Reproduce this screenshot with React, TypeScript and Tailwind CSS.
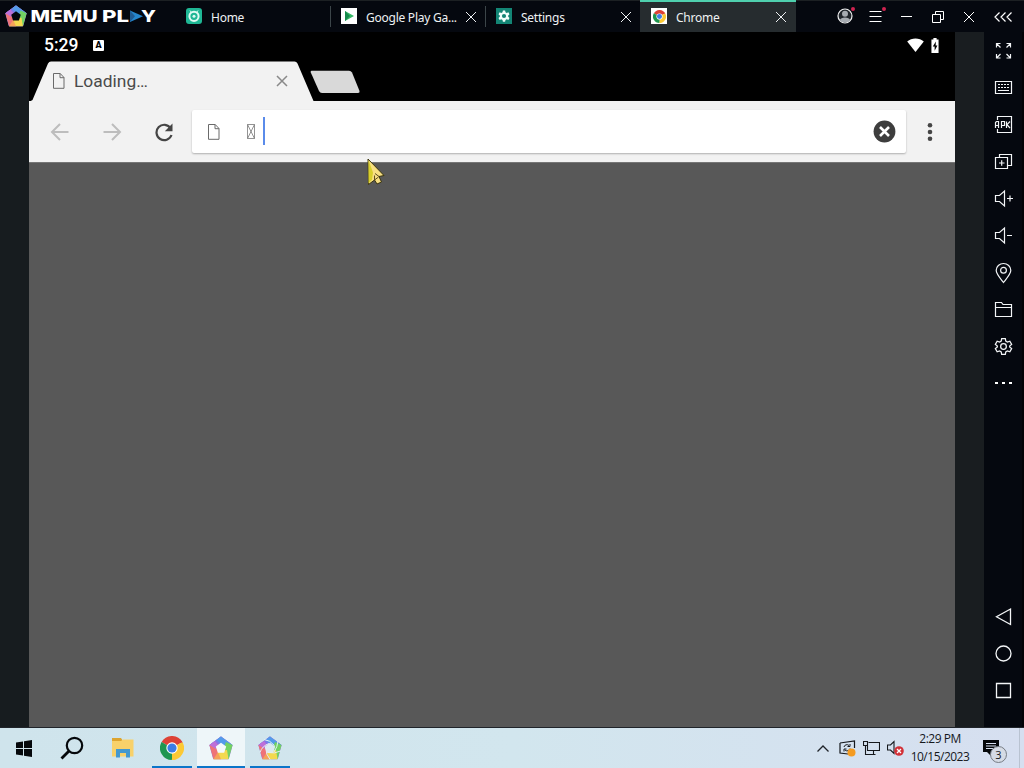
import type { ReactNode } from "react";

function Pentagon({ size, hole = "#05080f", swirl = false }: { size: number; hole?: string; swirl?: boolean }) {
  return (
    <svg width={size} height={size} viewBox="0 0 24 24">
      <path d="M12 .8L.8 9L4.600 22.800H19.400L23.200 9z" fill="#9b83d8" stroke="#9b83d8" strokeWidth="1" strokeLinejoin="round" />
      <path d="M12 .5L.5 9L8 12L13 6z" fill="#8078e8" />
      <path d="M12 .5L23.500 9L16 12L7.500 4z" fill="#539bea" />
      <path d="M23.500 9L19.500 23.200L13 17L17 6z" fill="#72d262" />
      <path d="M19.500 23.200H4.500L8 15L18 14z" fill="#f3d94f" />
      <path d="M12 23.200H4.500L8 14z" fill="#f5a25a" />
      <path d="M4.500 23.200L.5 9L8.500 8L9 16z" fill="#ee7378" />
      <path d="M.5 9L6 5L9 9L7 13z" fill="#bd6fd8" />
      <path d="M12 6.800L17.200 10.600L15.200 16.800H8.800L6.800 10.600z" fill={hole} />
      {swirl && (
        <path d="M6 3.500Q12 4 16.500 9.500M20 5Q19.500 11 16 16M22.500 15Q17 18 9.500 16.500M12 23.500Q8 19 7.500 11M2 16.500Q4 10 11 7.500" stroke="#e3f1f6" strokeWidth="1" fill="none" />
      )}
    </svg>
  );
}

function ChromeLogo({ size }: { size: number }) {
  return (
    <svg width={size} height={size} viewBox="0 0 24 24">
      <path d="M12 12L1.6 6A12 12 0 0 1 22.4 6Z" fill="#dd4236" />
      <path d="M12 12L22.4 6A12 12 0 0 1 12 24Z" fill="#fcc934" />
      <path d="M12 12L12 24A12 12 0 0 1 1.6 6Z" fill="#1f9650" />
      <path d="M12 6.5H22.7L20 4L12 4Z" fill="#dd4236" />
      <path d="M16.8 14.7L11.5 24L15 23.6L19 16Z" fill="#fcc934" />
      <path d="M7.2 14.7L1.6 6L3 12Z" fill="#1f9650" />
      <circle cx="12" cy="12" r="5.7" fill="#fff" />
      <circle cx="12" cy="12" r="4.6" fill="#3c7de6" />
    </svg>
  );
}

function Gear({ className }: { className?: string }) {
  return (
    <svg className={className} viewBox="0 0 24 24" fill="none" stroke="currentColor">
      <path d="M9.7 2h4.6l.6 3.2 2 1.2 3.1-1.1 2.3 4-2.5 2.1v1.2l2.5 2.1-2.3 4-3.1-1.1-2 1.2-.6 3.2H9.7l-.6-3.2-2-1.2L4 18.7l-2.3-4 2.5-2.1v-1.2L1.7 9.3l2.3-4 3.1 1.1 2-1.2z" />
      <circle cx="12" cy="12" r="3.6" />
    </svg>
  );
}

function PageIcon() {
  return (
    <svg width="12" height="16" viewBox="0 0 12 16" fill="none" stroke="#6a6a6a" strokeWidth="1">
      <path d="M.5.5h6.7l3.8 4v10.8H.5zM7 .5v4.2h4" />
    </svg>
  );
}

function Cross({ className }: { className?: string }) {
  return (
    <svg width="12" height="12" viewBox="0 0 12 12" stroke="currentColor" fill="none" className={className}>
      <path d="M1 1l10 10M11 1L1 11" />
    </svg>
  );
}

const homeIcon = (
  <svg width="16" height="16" viewBox="0 0 16 16" fill="none">
    <rect width="16" height="16" rx="3" fill="#1fb795" />
    <circle cx="8" cy="8.300" r="4.600" stroke="#dffaf3" strokeWidth="2" />
    <circle cx="8" cy="8.300" r="1.500" fill="#dffaf3" />
    <path d="M4 2.500l1.500 2M12 2.500l-1.500 2" stroke="#dffaf3" />
  </svg>
);

const playIcon = (
  <svg width="16" height="16" viewBox="0 0 16 16">
    <path d="M0 0h16v16H0z" fill="#fff" />
    <path d="M4 3l9 5-9 5z" fill="#35b866" />
    <path d="M4 3l5 5-5 5z" fill="#168a4d" />
  </svg>
);

const settingsIcon = (
  <svg width="16" height="16" viewBox="0 0 16 16">
    <path d="M0 0h16v16H0z" fill="#138575" />
    <path
      d="M6.900 2.500h2.200l.4 1.700 1.200.7 1.700-.6 1.100 2-1.300 1.200v1.200l1.300 1.200-1.100 2-1.700-.6-1.200.7-.4 1.700H6.900l-.4-1.700-1.200-.7-1.700.6-1.100-2 1.300-1.200V7.500L2.500 6.300l1.100-2 1.700.6 1.200-.7z"
      fill="#f2fffc"
    />
    <circle cx="8" cy="8" r="2.100" fill="#138575" />
  </svg>
);

const chromeIcon = (
  <span className="flex size-4 items-center justify-center bg-white">
    <ChromeLogo size={13} />
  </span>
);

const tabs = [
  { label: "Home", icon: homeIcon, closable: false, active: false },
  { label: "Google Play Ga...", icon: playIcon, closable: true, active: false },
  { label: "Settings", icon: settingsIcon, closable: true, active: false },
  { label: "Chrome", icon: chromeIcon, closable: true, active: true },
];

function TitleButton({ children, dot, label }: { children: ReactNode; dot?: boolean; label: string }) {
  return (
    <button aria-label={label} className="relative flex h-8 w-[31px] items-center justify-center text-white">
      {children}
      {dot && <span className="absolute top-[7px] left-[22px] size-1 rounded-full bg-[#cf2350]" />}
    </button>
  );
}

function TitleBar() {
  return (
    <header className="flex h-8 border-t border-[#1c2023] bg-[#05080f]">
      <div className="-mt-px flex h-8 w-[175px] items-center pl-[5px]">
        <Pentagon size={22} />
        <svg width="132" height="28" viewBox="0 0 132 28" className="ml-px" fill="#fff" fontFamily="Inter" fontWeight="800" fontSize="16">
          <text x="2.5" y="20" textLength="67" lengthAdjust="spacingAndGlyphs">MEMU</text>
          <text x="74" y="20" textLength="27" lengthAdjust="spacingAndGlyphs">PL</text>
          <path d="M102 8.500L115 14.300L102 20z" fill="#2586cc" />
          <path d="M102 8.500L107 14.300L102 20z" fill="#205c93" />
          <text x="113" y="20" textLength="15" lengthAdjust="spacingAndGlyphs">Y</text>
        </svg>
      </div>
      {tabs.map((tab, i) => (
        <div
          key={tab.label}
          className={`relative -mt-px flex h-8 items-center pl-[11px] font-['Noto_Sans'] text-[12px] tracking-[-0.25px] text-[#eef1f3] ${
            tab.active ? "w-[156px] border-t-2 border-[#4fd0ae] bg-[#262c2f] pr-[9px] pb-0.5" : "w-[155px] pr-2"
          }`}
        >
          {tab.icon}
          <span className="ml-[9px] grow pt-[3px] leading-4 whitespace-nowrap">{tab.label}</span>
          {tab.closable && <Cross className="mt-px shrink-0" />}
          {i < 2 && <span className="absolute top-1.5 -right-px h-[21px] w-px bg-[#3c4549]" />}
        </div>
      ))}
      <div className="-mt-px ml-[33px] flex">
        <TitleButton dot label="Account">
          <svg width="16" height="16" viewBox="0 0 16 16">
            <circle cx="8" cy="8" r="7" fill="#20252b" stroke="#f2f2f2" strokeWidth="1.2" />
            <circle cx="8" cy="5.800" r="3" fill="#a6abb1" />
            <path d="M2.800 12a5.400 3.500 0 0 1 10.400 0a6.500 6.500 0 0 1-10.400 0z" fill="#a6abb1" />
          </svg>
        </TitleButton>
        <TitleButton dot label="Menu">
          <svg width="13" height="12" viewBox="0 0 13 12" stroke="currentColor">
            <path d="M.5 1.500h12M.5 6.500h12M.5 11.500h12" />
          </svg>
        </TitleButton>
        <TitleButton label="Minimize">
          <span className="mt-px h-px w-[11px] bg-white" />
        </TitleButton>
        <TitleButton label="Restore">
          <svg width="12" height="12" viewBox="0 0 12 12" fill="none" stroke="currentColor" className="mt-px">
            <path d="M.5 3.500h8v8h-8zM3.500 3V.5h8v8H9" />
          </svg>
        </TitleButton>
        <TitleButton label="Close">
          <Cross className="mt-px" />
        </TitleButton>
        <button aria-label="Collapse" className="ml-[3px] flex w-[31px] items-center justify-center pt-px text-white">
          <svg width="18" height="10" viewBox="0 0 18 10" fill="none" stroke="currentColor" strokeWidth="1.2">
            <path d="M5.500.5L1 5l4.500 4.500M11.500.5L7 5l4.500 4.500M17.500.5L13 5l4.500 4.500" />
          </svg>
        </button>
      </div>
    </header>
  );
}

const tools: { label: string; icon: ReactNode }[] = [
  { label: "Fullscreen", icon: <path d="M2.500 6.500v-4h4M2.500 2.500l4 4M12.500 2.500h4v4M16.500 2.500l-4 4M2.500 13v4h4M2.500 17l4-4M16.500 13v4h-4M16.500 17l-4-4" /> },
  { label: "Keyboard", icon: <><path d="M1.500 3.500h16v12h-16zM4 12.500h11" /><path d="M4 6.500h11M4 9.500h11" strokeDasharray="2 1" /></> },
  {
    label: "Install APK",
    icon: (
      <>
        <path d="M3.500 5V1.500h14v16h-14V14" />
        <path d="M1.500 13V7.500l1-1h2v6.500M1.500 10.500h3M7.500 13V6.500h3v4h-3M12.500 6.500V13M16 6.500L13 9.700l3 3.300" />
      </>
    ),
  },
  { label: "Multi-window", icon: <path d="M1.500 5.500h12v11h-12zM5.500 5V2.500h12v11H14M5 11h5.500M7.700 8.300v5.500" /> },
  { label: "Volume up", icon: <path d="M1.500 6.500h4l5-4.500v15l-5-4.500h-4zM13 9.500h6M16 6.500v6" /> },
  { label: "Volume down", icon: <path d="M1.500 6.500h4l5-4.500v15l-5-4.500h-4zM13 9.500h5" /> },
  { label: "Location", icon: <><path d="M9.500 19.500C6 15 2.200 11 2.200 7.300a7.300 6.800 0 0 1 14.600 0c0 3.700-3.800 7.700-7.300 12.200z" /><circle cx="9.500" cy="7.300" r="2.900" /></> },
  { label: "Shared folder", icon: <path d="M1.500 16.500v-14h6l1.500 2h8.500v12zM1.500 7.500h16" /> },
];

const navKeys = [
  { label: "Back", icon: <path d="M16.500 2v15.500L2.500 9.800z" /> },
  { label: "Home", icon: <circle cx="9.500" cy="9.500" r="7.500" /> },
  { label: "Recent", icon: <path d="M2.500 2.500h14v14h-14z" /> },
];

function ToolButton({ label, children }: { label: string; children: ReactNode }) {
  return (
    <button aria-label={label} className="flex h-[37px] w-full shrink-0 items-center justify-center">
      {children}
    </button>
  );
}

function SideBar() {
  return (
    <aside className="flex w-10 flex-col border-r-2 border-[#020306] bg-[#05080f] pb-[18px] pl-px text-[#f3f5f7]">
      {tools.map((tool) => (
        <ToolButton key={tool.label} label={tool.label}>
          <svg width="19" height="19" viewBox="0 0 19 19" fill="none" stroke="currentColor" strokeWidth="1.2" className="overflow-visible">
            {tool.icon}
          </svg>
        </ToolButton>
      ))}
      <ToolButton label="Settings">
        <Gear className="size-[19px] stroke-[1.6]" />
      </ToolButton>
      <ToolButton label="More">
        <span className="-mt-0.5 flex gap-1">
          <i className="h-0.5 w-[3px] bg-white" />
          <i className="h-0.5 w-[3px] bg-white" />
          <i className="h-0.5 w-[3px] bg-white" />
        </span>
      </ToolButton>
      <div className="mt-auto">
        {navKeys.map((key) => (
          <ToolButton key={key.label} label={key.label}>
            <svg width="19" height="19" viewBox="0 0 19 19" fill="none" stroke="currentColor" strokeWidth="1.3">
              {key.icon}
            </svg>
          </ToolButton>
        ))}
      </div>
    </aside>
  );
}

function StatusBar() {
  return (
    <div className="flex h-[29px] items-center pr-4 pb-[3px] pl-[15px] font-[Roboto] text-[17.5px] font-medium text-white">
      <span className="w-[49px] pt-px">5:29</span>
      <span className="mt-px flex h-[11px] w-[11px] items-center justify-center rounded-[1px] bg-white text-[9px] leading-none font-black text-black">A</span>
      <svg width="17" height="14" viewBox="0 0 17 14" className="ml-auto">
        <path d="M8.500 14L0.200 3.400C4.500-.5 12.500-.5 16.800 3.400z" fill="#fff" />
      </svg>
      <svg width="8" height="15" viewBox="0 0 9 15" preserveAspectRatio="none" className="ml-[7px]">
        <path d="M.5 1.500h2.200V0h3.600v1.500h2.200V15H.5z" fill="#fff" />
        <path d="M5.500 3.500L2 8.500h2.100v4.200L7.200 7.500H5.200z" fill="#000" />
      </svg>
    </div>
  );
}

function Browser() {
  return (
    <main className="flex w-[926px] flex-col bg-black font-[Roboto]">
      <StatusBar />
      <div className="flex h-10">
        <div className="relative h-10 w-[286px]">
          <svg width="286" height="41" viewBox="0 0 286 41" className="absolute inset-0">
            <path d="M0 41L3.500 39L19 2.500Q20 .5 22 .5H265.500Q267.500 .5 268.500 2.500L284.500 40L286 41z" fill="#f2f2f2" />
          </svg>
          <div className="relative flex h-10 items-center pr-[27px] pl-6">
            <PageIcon />
            <span className="ml-[9px] grow text-[17.4px] leading-5 text-[#4a4a4a]">Loading…</span>
            <Cross className="stroke-[1.5] text-[#898989]" />
          </div>
        </div>
        <svg width="50" height="24" viewBox="0 0 50 24" className="mt-[9px] -ml-[5px]">
          <path d="M1.500 .8H39Q41 .8 42 2.500L49.500 21Q50 23 48 23H12Q10 23 9 21L.8 2.500Q.2 .8 1.500 .8z" fill="#d9d9d9" />
        </svg>
      </div>
      <div className="flex h-[61px] items-center bg-[#f2f2f2] pl-[21px]">
        <svg width="20" height="20" viewBox="0 0 20 20" fill="none" stroke="#bdbdbd" strokeWidth="2">
          <path d="M18.500 10H2M10 2L2 10l8 8" />
        </svg>
        <svg width="20" height="20" viewBox="0 0 20 20" fill="none" stroke="#bdbdbd" strokeWidth="2" className="ml-8">
          <path d="M1.500 10h16.500M10 2l8 8-8 8" />
        </svg>
        <svg width="20" height="20" viewBox="0 0 20 20" fill="none" stroke="#454545" strokeWidth="2.200" className="ml-8">
          <path d="M16.700 6.300A7.700 7.700 0 1 0 17.500 13" />
          <path d="M18.500 1.500v7.700h-7.700z" fill="#454545" stroke="none" />
        </svg>
        <div className="ml-[18px] flex h-[43px] w-[714px] items-center rounded-[2px] bg-white pr-2.5 pl-4 shadow-[0_1px_2px_rgba(0,0,0,0.28)]">
          <PageIcon />
          <svg width="8" height="15" viewBox="0 0 8 15" fill="none" stroke="#777" strokeWidth=".8" className="ml-[27px]">
            <path d="M.5.5h7v14h-7zM.5.5l7 14M7.500.5l-7 14" />
          </svg>
          <span className="mb-px ml-2 h-7 w-0.5 bg-[#5a8bea]" />
          <svg width="23" height="23" viewBox="0 0 23 23" className="ml-auto">
            <circle cx="11.500" cy="11.500" r="10.900" fill="#3d3d3d" />
            <path d="M7 7l9 9M16 7l-9 9" stroke="#fff" strokeWidth="2.600" />
          </svg>
        </div>
        <svg width="6" height="20" viewBox="0 0 6 20" className="ml-[21px]" fill="#454545">
          <circle cx="3" cy="3.300" r="2.300" />
          <circle cx="3" cy="10" r="2.300" />
          <circle cx="3" cy="16.700" r="2.300" />
        </svg>
      </div>
      <div className="grow border-t border-[#767676] bg-[#585858]" />
    </main>
  );
}

function TaskButton({ children, className = "" }: { children: ReactNode; className?: string }) {
  return <button className={`flex h-10 items-center justify-center ${className}`}>{children}</button>;
}

function TaskBar() {
  return (
    <footer className="flex h-10 bg-linear-to-r from-[#cfe4ec] via-[#d2e6ee] to-[#d6dff0] font-['Open_Sans'] text-[12px] text-[#15181c]">
      <TaskButton className="w-12">
        <svg width="16" height="17" viewBox="0 0 16 17" fill="#05080b">
          <path d="M0 2.500L7 1.500V8H0zM8 1.300L16 0v8H8zM0 9h7v6.500l-7-1zM8 9h8v8l-8-1.300z" />
        </svg>
      </TaskButton>
      <TaskButton className="w-12">
        <svg width="24" height="24" viewBox="0 0 24 24" fill="none" stroke="#05080b" strokeWidth="2.200">
          <circle cx="14.500" cy="9.500" r="7.700" />
          <path d="M9 15L1.500 22.500" strokeWidth="2.800" />
        </svg>
      </TaskButton>
      <TaskButton className="w-[53px]">
        <svg width="22" height="20" viewBox="0 0 22 20">
          <path d="M0 0h9l2 3H0z" fill="#dda42f" />
          <path d="M0 3h9l2-1.500h10.500V18.500H0z" fill="#f8d16a" />
          <path d="M4 11h14v8.500h-4V15H8v4.500H4z" fill="#4499cf" />
        </svg>
      </TaskButton>
      <TaskButton className="ml-[3px] w-10 border-b-2 border-[#0b75c9] pt-0.5">
        <ChromeLogo size={24} />
      </TaskButton>
      <TaskButton className="ml-[5px] w-12 border-b-2 border-[#0b75c9] bg-[#eef6f9] pt-0.5">
        <Pentagon size={24} hole="#f4fafb" />
      </TaskButton>
      <TaskButton className="ml-[5px] w-10 border-b-2 border-[#0b75c9] pt-0.5">
        <Pentagon size={24} hole="#dcebf1" swirl />
      </TaskButton>

      <div className="ml-auto flex items-center">
        <svg width="12" height="7" viewBox="0 0 12 7" fill="none" stroke="#20242a" strokeWidth="1.300">
          <path d="M.5 6.500L6 1l5.500 5.500" />
        </svg>
        <svg width="17" height="17" viewBox="0 0 17 17" fill="none" stroke="#15181c" strokeWidth="1.200" className="ml-2.5">
          <path d="M1 3L15.500 1v7M1 3v10l8 1" />
          <path d="M5 7a3 3 0 0 1 5-1.500M11 4v2.500H8.500M11 8.500a3 3 0 0 1-5 1.500M5 11.500V9h2.500" strokeWidth="1" />
          <circle cx="12.500" cy="12.500" r="4" fill="#f49b21" stroke="none" />
        </svg>
        <svg width="17" height="15" viewBox="0 0 17 15" fill="none" stroke="#15181c" strokeWidth="1.100" className="ml-[7px]">
          <path d="M5.500 1.500h11v8h-12V5M.5.5h4v4h-4zM2.500 5v8.500h10M10.500 10v3.500" />
        </svg>
        <svg width="17" height="16" viewBox="0 0 17 16" fill="none" stroke="#15181c" strokeWidth="1.100" className="ml-[7px]">
          <path d="M.5 5h3l3.500-3.500v12L3.500 10h-3z" />
          <circle cx="12" cy="11" r="4.800" fill="#d23138" stroke="none" />
          <path d="M10 9l4 4M14 9l-4 4" stroke="#fff" strokeWidth="1.300" />
        </svg>
        <div className="ml-[6px] w-[60px] text-center leading-[18px] tracking-[-0.5px] whitespace-nowrap">
          <div>2:29 PM</div>
          <div>10/15/2023</div>
        </div>
        <div className="relative ml-[13px] h-6 w-6">
          <svg width="16" height="16" viewBox="0 0 16 16" className="mt-1">
            <path d="M0 0h16v12H8v4l-4-4H0z" fill="#05080b" />
            <path d="M3 3.500h10M3 6h10M3 8.500h7" stroke="#d6dff0" />
          </svg>
          <span className="absolute top-[10px] left-[7px] flex size-[17px] items-center justify-center rounded-full border border-[#777d85] bg-[#d5dbe5] text-[11px] leading-none">3</span>
        </div>
        <span className="ml-3 h-10 w-px bg-[#b9c3d1]" />
        <span className="w-1" />
      </div>
    </footer>
  );
}

export default function App() {
  return (
    <div className="relative flex h-[768px] w-[1024px] flex-col overflow-hidden bg-[#05080f]">
      <TitleBar />
      <div className="flex h-[696px] border-b border-[#20242a]">
        <div className="w-[29px] bg-[#171c1f]" />
        <Browser />
        <div className="w-[29px] bg-[#191d20]" />
        <SideBar />
      </div>
      <TaskBar />
      {/* mouse pointer */}
      <svg width="18" height="28" viewBox="0 0 18 28" className="absolute top-[158px] left-[367px]">
        <path d="M1 1L17 17.500L12 18.500L14.500 24L10 26L7.500 22L1.500 26.500z" fill="#f7df82" stroke="#3b3510" />
        <path d="M1.500 2L6 14.500L5 21.500L1.500 25.500z" fill="#d8cf2c" />
        <path d="M8 15.500l4 3M7.500 17.500v4.500l4-3" stroke="#5d4b1c" fill="none" />
      </svg>
    </div>
  );
}
